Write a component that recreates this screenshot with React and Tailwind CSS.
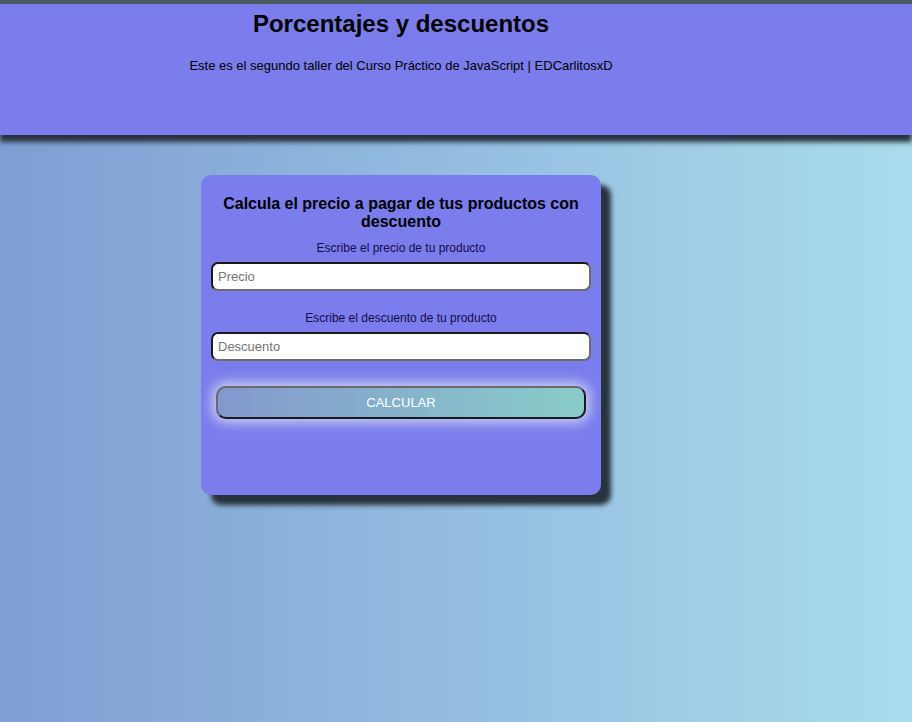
import React, { useState } from 'react';

function App() {
  const [precio, setPrecio] = useState('');
  const [descuento, setDescuento] = useState('');

  return (
    <div className="min-h-screen w-full bg-gradient-to-r from-[#7f9ed3] to-[#aadcec] font-['Liberation_Sans',Arial,sans-serif] text-black">
      {/* Header */}
      <header className="relative z-10 h-[135px] border-t-4 border-[#4b5a5f] bg-[#7a7deb] shadow-[0_7px_5px_#28323c]">
        <div className="w-[802px] text-center">
          <h1 className="pt-[6px] text-[24px] font-bold leading-[28px]">Porcentajes y descuentos</h1>
          <p className="mt-[20px] text-[13px] leading-[15px]">
            Este es el segundo taller del Curso Práctico de JavaScript | EDCarlitosxD
          </p>
        </div>
      </header>

      {/* Main */}
      <main className="w-[802px] pt-[40px]">
        <div className="mx-auto flex h-[320px] w-[400px] flex-col items-center rounded-[10px] bg-[#7a7deb] px-[10px] pt-[20px] shadow-[10px_10px_5px_#28323c]">
          <h2 className="px-[10px] text-center text-[16px] font-bold leading-[18px]">
            Calcula el precio a pagar de tus productos con descuento
          </h2>
          <label className="mt-[10px] text-[12px] leading-[14px] text-[#140c4c]">Escribe el precio de tu producto</label>
          <input
            type="number"
            value={precio}
            onChange={(e) => setPrecio(e.target.value)}
            placeholder="Precio"
            className="mt-[7px] h-[29px] w-[380px] rounded-[7px] border-2 border-t-[#1a1a1a] border-l-[#1a1a1a] border-b-[#6b6b6b] border-r-[#6b6b6b] bg-white px-[5px] text-[13px] outline-none placeholder:text-[#757575]"
          />
          <label className="mt-[20px] text-[12px] leading-[14px] text-[#140c4c]">Escribe el descuento de tu producto</label>
          <input
            type="number"
            value={descuento}
            onChange={(e) => setDescuento(e.target.value)}
            placeholder="Descuento"
            className="mt-[7px] h-[29px] w-[380px] rounded-[7px] border-2 border-t-[#1a1a1a] border-l-[#1a1a1a] border-b-[#6b6b6b] border-r-[#6b6b6b] bg-white px-[5px] text-[13px] outline-none placeholder:text-[#757575]"
          />
          <button
            type="button"
            className="mt-[25px] h-[33px] w-[370px] rounded-[10px] border-2 border-t-[#6b6b6b] border-l-[#6b6b6b] border-b-[#1a1a1a] border-r-[#1a1a1a] bg-gradient-to-r from-[#8398cd] to-[#88cdc8] text-[13px] text-white shadow-[0_0_12px_4px_#c8cbf5]"
          >
            CALCULAR
          </button>
        </div>
      </main>
    </div>
  );
}

export default App;
